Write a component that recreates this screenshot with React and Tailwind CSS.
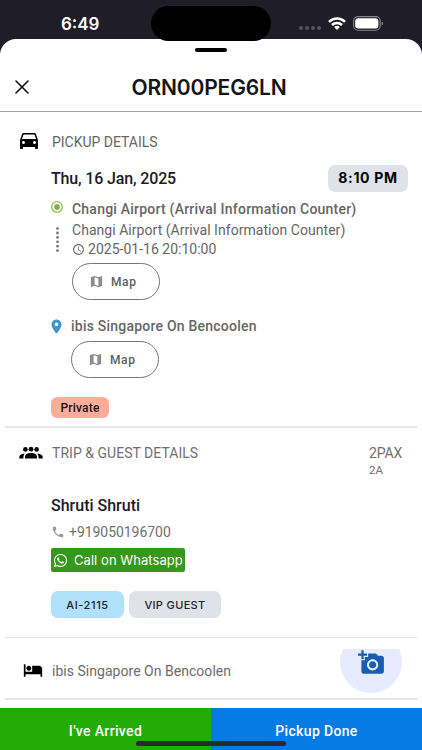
import {
    MdDirectionsCar,
    MdHotel,
    MdAddAPhoto,
    MdMap,
    MdPlace,
    MdPhone,
    MdAccessTime,
    MdRadioButtonChecked,
} from "react-icons/md";
import { FaWhatsapp } from "react-icons/fa";

function StatusBar() {
    return (
        <div className="relative h-[39px] shrink-0">
            <span className="absolute left-[61px] top-[12px] font-['Inter'] text-[17px] leading-6 font-semibold text-white">
                6:49
            </span>

            {/* Dynamic island */}
            <div className="absolute left-[151px] top-[6px] z-10 w-[120px] h-[35px] rounded-full bg-black" />

            {/* Signal, wifi, battery */}
            <div className="absolute left-[299px] top-[26px] flex gap-[2px]">
                <i className="size-1 rounded-full bg-[#55555f]" />
                <i className="size-1 rounded-full bg-[#55555f]" />
                <i className="size-1 rounded-full bg-[#55555f]" />
                <i className="size-1 rounded-full bg-[#55555f]" />
            </div>
            <svg className="absolute left-[328px] top-[17px]" width="18" height="13" viewBox="0 0 18 13" fill="none" stroke="#fff" strokeWidth="2.5">
                <path d="M1 4.9a11.4 11.4 0 0 1 16 0" />
                <path d="M4 8a7.1 7.1 0 0 1 10 0" />
                <path d="M9 13 6.1 10.1a4.1 4.1 0 0 1 5.8 0z" fill="#fff" stroke="none" />
            </svg>
            <svg className="absolute left-[353px] top-[16px]" width="31" height="15" viewBox="0 0 31 15">
                <rect x="0.6" y="0.6" width="26.6" height="13.6" rx="4.4" fill="none" stroke="#85858c" strokeWidth="1.1" />
                <rect x="2.2" y="2.2" width="23.2" height="10.4" rx="3" fill="#fff" />
                <path d="M28.6 5.2v4.6q1.5-.8 1.5-2.3t-1.5-2.3z" fill="#85858c" />
            </svg>
        </div>
    );
}

function GroupIcon() {
    return (
        <svg className="-mt-px" width="24" height="14" viewBox="0 0 24 14">
            <circle cx="6.4" cy="3.4" r="2.3" />
            <circle cx="12" cy="3.2" r="2.4" />
            <circle cx="17.6" cy="3.4" r="2.3" />
            <path d="M6 12.6v-1.4q0-4.1 6-4.1t6 4.1v1.4z" />
            <path d="M.3 12.6v-1.3q0-3.1 5.3-3.7-1.2 1.8-1.2 5z" />
            <path d="M23.7 12.6v-1.3q0-3.1-5.3-3.7 1.2 1.8 1.2 5z" />
        </svg>
    );
}

function MapButton() {
    return (
        <button className="w-[88px] h-[37px] pl-[16px] rounded-full border border-[#79747e] flex items-center gap-[7px] text-[#606060]">
            <MdMap className="size-[15px] text-[#8c8c8c]" />
            <span className="text-[12px] font-medium tracking-[0.6px]">Map</span>
        </button>
    );
}

export default function App() {
    return (
        <div className="w-[422px] h-[750px] overflow-hidden bg-[#1e1d28] flex flex-col font-['Roboto',sans-serif]">
            <StatusBar />

            <div className="grow min-h-0 rounded-t-[16px] bg-white flex flex-col overflow-hidden">

                {/* Header */}
                <header className="h-[73px] shrink-0 border-b border-[#a0a0a0] relative flex items-center justify-center pt-[25px]">
                    <div className="absolute left-[195px] top-[9px] w-[32px] h-[4px] rounded-full bg-black" />
                    <svg className="absolute left-[15px] top-[41px]" width="14" height="14" viewBox="0 0 14 14" stroke="#111" strokeWidth="1.6" strokeLinecap="round">
                        <path d="M1 1l12 12M13 1L1 13" />
                    </svg>
                    <h1 className="-ml-[4px] font-['Inter'] text-[21px] leading-6 font-semibold text-[#151515] tracking-[-0.15px] whitespace-nowrap">
                        ORN00PEG6LN
                    </h1>
                </header>

                {/* Pickup details */}
                <section className="h-[316px] shrink-0 mx-[5px] border-b-2 border-[#e8e8e8] pl-[12px] pr-[9px] pt-[20px] text-[#666]">
                    <div className="flex items-center h-[20px]">
                        <MdDirectionsCar className="size-[24px] -mt-[4px] text-black" />
                        <h2 className="ml-[11px] text-[14px] tracking-[-0.02px]">PICKUP DETAILS</h2>
                    </div>

                    <div className="pl-[34px]">
                        <div className="mt-[13px] h-[27px] flex items-center justify-between">
                            <span className="pt-px text-[16px] font-medium text-[#1c1b1f] tracking-[-0.15px]">Thu, 16 Jan, 2025</span>
                            <span className="w-[80px] h-[27px] rounded-[7px] bg-[#dfe2e8] text-center font-['Inter'] text-[14px] leading-[25px] font-bold text-black tracking-[0.7px]">
                                8:10 PM
                            </span>
                        </div>

                        <div className="mt-[8px] flex">
                            <div className="w-[21px] flex flex-col">
                                <MdRadioButtonChecked className="size-[14px] -ml-px text-[#7cb342]" />
                                <svg className="mt-[13px] ml-[5px]" width="3" height="26" viewBox="0 0 3 26" fill="#777">
                                    {[0, 1, 2, 3, 4, 5].map((dot) => (
                                        <circle key={dot} cx="1.5" cy={1.6 + dot * 4.4} r="1.4" />
                                    ))}
                                </svg>
                            </div>
                            <div className="whitespace-nowrap">
                                <p className="h-[21px] leading-[19px] text-[14px] font-medium tracking-[0.22px]">Changi Airport (Arrival Information Counter)</p>
                                <p className="h-[19px] leading-[19px] text-[14px] tracking-[0.04px]">Changi Airport (Arrival Information Counter)</p>
                                <p className="h-[19px] flex items-center gap-[3px] text-[14px] tracking-[0.01px]">
                                    <MdAccessTime className="size-[13px]" />
                                    2025-01-16 20:10:00
                                </p>
                                <div className="mt-[4px]">
                                    <MapButton />
                                </div>
                            </div>
                        </div>

                        <div className="mt-[17px] flex">
                            <MdPlace className="w-[17px] h-[17px] -ml-[3px] mt-px text-[#3d94d1]" />
                            <div className="ml-[6px]">
                                <p className="h-[24px] leading-[19px] text-[14px] font-medium tracking-[0.22px]">ibis Singapore On Bencoolen</p>
                                <MapButton />
                            </div>
                        </div>

                        <span className="mt-[19px] block w-[58px] h-[21px] rounded-[6px] bg-[#ffad9b] text-center text-[12px] leading-[22px] font-medium text-[#1c1010] tracking-[0.2px]">
                            Private
                        </span>
                    </div>
                </section>

                {/* Trip & guest details */}
                <section className="h-[210px] shrink-0 mx-[5px] border-b border-[#e4e4e4] pl-[14px] pr-[15px] pt-[14px] text-[#707070]">
                    <div className="flex h-[36px]">
                        <div className="pt-[5px]">
                            <GroupIcon />
                        </div>
                        <h2 className="ml-[9px] grow leading-[22px] text-[14px] tracking-[0.03px]">TRIP &amp; GUEST DETAILS</h2>
                        <div className="w-[33px]">
                            <p className="leading-[22px] text-[14px] tracking-[-0.1px]">2PAX</p>
                            <p className="leading-[12px] text-[11.5px]">2A</p>
                        </div>
                    </div>

                    <div className="pl-[32px]">
                        <h3 className="mt-[17px] leading-[22px] text-[16px] font-medium text-[#1c1b1f]">Shruti Shruti</h3>
                        <p className="mt-[5px] h-[20px] flex items-center gap-[4px] text-[14px] tracking-[-0.05px]">
                            <MdPhone className="size-[14px] text-[#999]" />
                            +919050196700
                        </p>
                        <button className="mt-[6px] w-[134px] h-[24px] pl-[2px] rounded-[2px] bg-[#36981b] flex items-center gap-[6px] text-white whitespace-nowrap">
                            <FaWhatsapp className="size-[15px]" />
                            <span className="pt-px font-['Inter'] text-[13px] tracking-[0.06px]">Call on Whatsapp</span>
                        </button>
                        <div className="mt-[19px] flex gap-[5px] text-[11px] leading-[28px] font-medium text-center font-['Inter'] text-[#1d2529]">
                            <span className="w-[73px] h-[27px] rounded-[7px] bg-[#b1e0fb] tracking-[0.6px]">AI-2115</span>
                            <span className="w-[92px] h-[27px] rounded-[7px] bg-[#dfe2e8] tracking-[0.35px]">VIP GUEST</span>
                        </div>
                    </div>
                </section>

                {/* Hotel */}
                <section className="h-[62px] shrink-0 mx-[5px] border-b-2 border-[#e6e6e6] pl-[18px] pr-[15px] flex">
                    <MdHotel className="size-[20px] mt-[22px] text-black" />
                    <p className="ml-[9px] grow leading-[67px] text-[14px] tracking-[0.03px] text-[#6c6c6c]">ibis Singapore On Bencoolen</p>
                    <button className="mt-[11px] w-[62px] h-[44px] overflow-hidden">
                        <span className="-mt-[18px] size-[62px] rounded-full bg-[#e7ebff] flex items-center justify-center">
                            <MdAddAPhoto className="size-[27px] text-[#175eb0]" />
                        </span>
                    </button>
                </section>
            </div>

            {/* Actions */}
            <div className="relative h-[50px] shrink-0 bg-white">
                <div className="mt-[8px] h-[42px] grid grid-cols-2 font-medium text-white text-[14px] tracking-[0.35px]">
                    <button className="bg-[#24ab05] pt-[4px]">I&apos;ve Arrived</button>
                    <button className="bg-[#077ae4] pt-[4px]">Pickup Done</button>
                </div>
                <div className="absolute left-[136px] bottom-[4px] w-[150px] h-[5px] rounded-full bg-[#272b2c]" />
            </div>
        </div>
    );
}
